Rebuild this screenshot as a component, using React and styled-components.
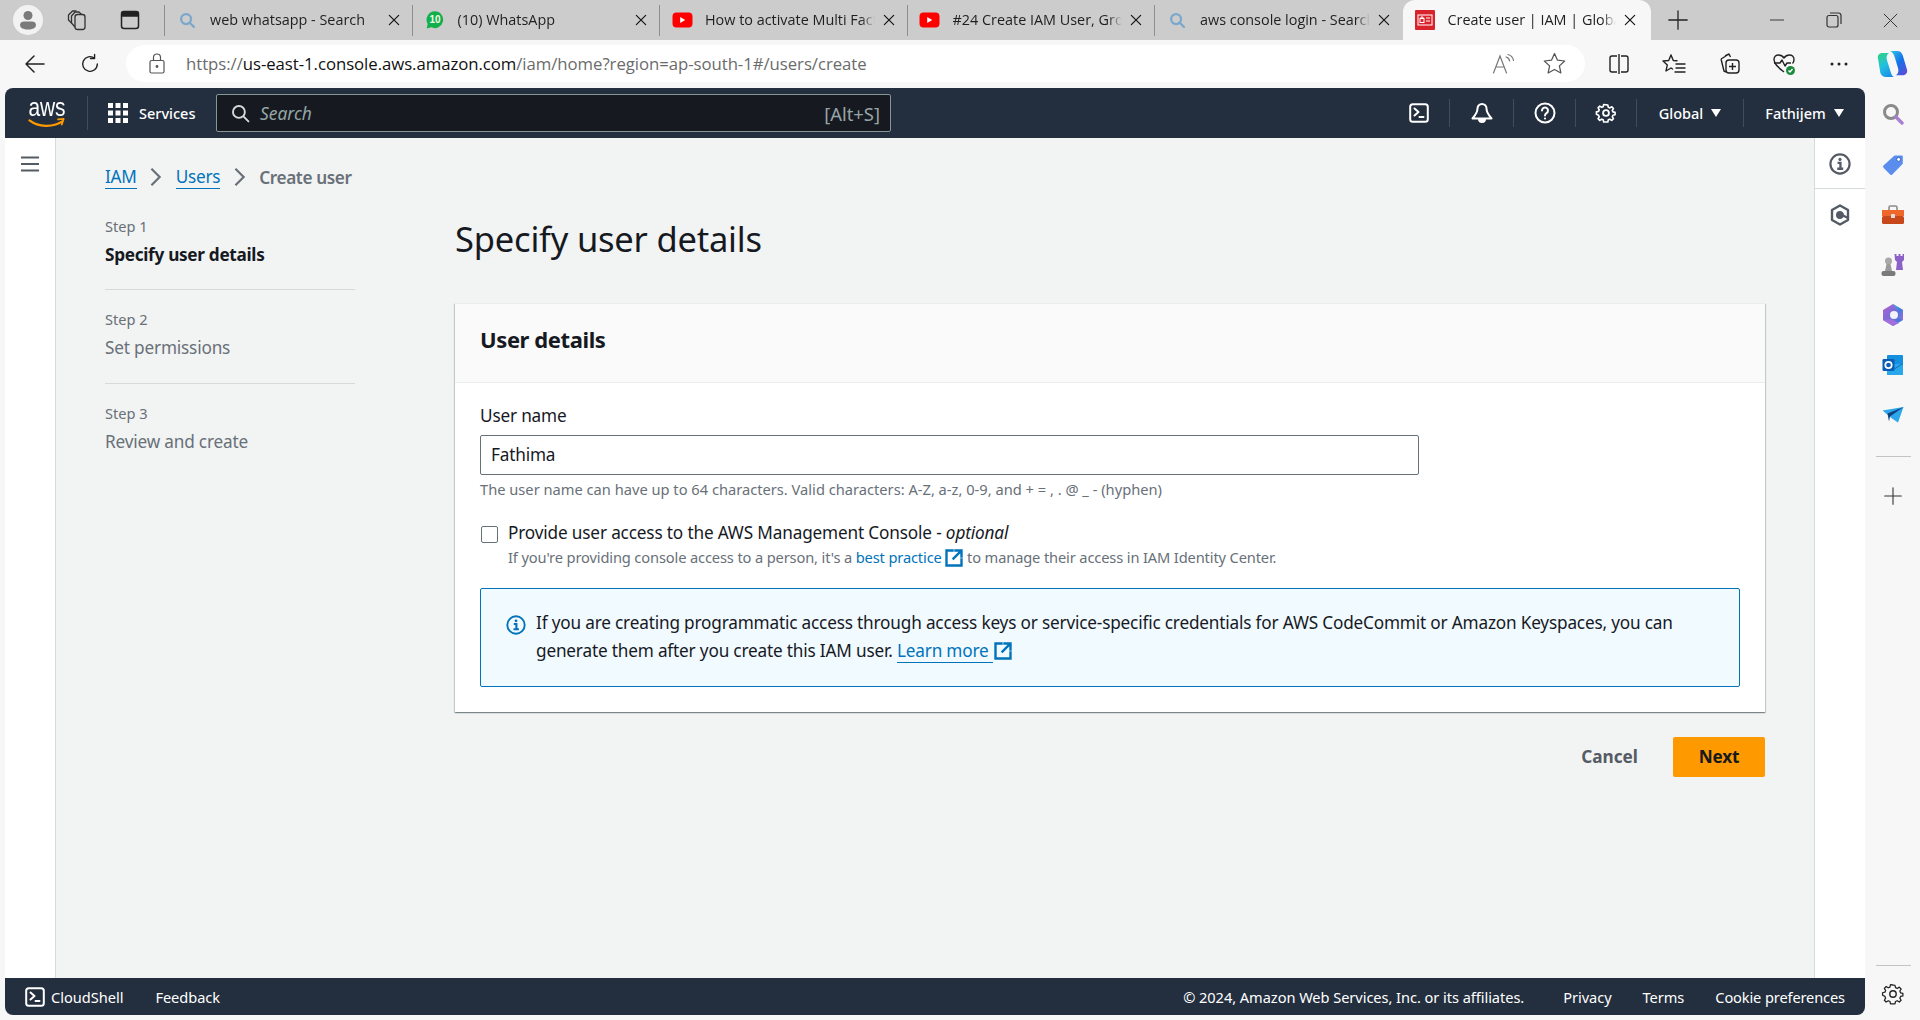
import React from "react";
import styled, { createGlobalStyle } from "styled-components";

const EMBER = `"Noto Sans", "Open Sans", Arial, sans-serif`;
const UI = `"Open Sans", "Noto Sans", Arial, sans-serif`;

const Global = createGlobalStyle`
  html, body { margin: 0; padding: 0; height: 100%; background: #f7f7f7; overflow: hidden; }
  #root { height: 100%; }
  * { box-sizing: border-box; }
`;

const Page = styled.div`
  width: 1920px; height: 1020px; display: flex; flex-direction: column;
  font-family: ${EMBER}; background: #f7f7f7; overflow: hidden;
`;

/* Browser tab strip */
const TabStrip = styled.div`
  height: 40px; flex: none; background: #cccccc; display: flex; align-items: stretch;
`;
const ProfileArea = styled.div`
  width: 164px; display: flex; align-items: center; flex: none; padding-left: 13px; color: #333;
`;
const Avatar = styled.div`
  width: 30px; height: 30px; border-radius: 50%; background: #f2f2f2; display: flex;
  align-items: center; justify-content: center; margin-right: 22px;
`;
const StripIcon = styled.span`
  display: flex; width: 24px; justify-content: center; margin-right: ${p => p.$gap || 0}px;
`;
const StripSep = styled.span`width: 1px; height: 31px; margin-top: 5px; background: #8f8f8f; flex: none;`;
const Tab = styled.div`
  width: ${p => p.$active ? 248 : 247.5}px; flex: none; height: 40px; display: flex; align-items: center; position: relative;
  padding-left: 11px; padding-right: ${p => p.$active ? 11 : 9}px;
  background: ${p => p.$active ? "#f7f7f7" : "transparent"};
  border-radius: ${p => p.$active ? "12px 12px 0 0" : "0"};
  &::after {
    content: ""; display: ${p => p.$sep ? "block" : "none"};
    position: absolute; right: 0; top: 5px; height: 31px; width: 1px; background: #8f8f8f;
  }
`;
const FavSlot = styled.span`
  width: 22px; height: 22px; flex: none; display: flex; align-items: center; justify-content: center; margin-right: 12px;
`;
const TabTitle = styled.span`
  flex: 1; min-width: 0; font-family: ${UI}; font-size: 14.4px; line-height: 20px; margin-top: -1px; color: #1f1f1f; white-space: nowrap; overflow: hidden;
  -webkit-mask-image: linear-gradient(to right, #000 calc(100% - 14px), transparent);
  mask-image: linear-gradient(to right, #000 calc(100% - 14px), transparent);
`;
const TabClose = styled.span`display: flex; flex: none; margin-left: 4px; width: 20px; justify-content: center; color: #111;`;
const NewTab = styled.span`display: flex; width: 54px; justify-content: center; align-items: center; color: #222;`;
const WinControls = styled.div`
  margin-left: auto; display: flex; align-items: center; color: #333; padding-right: 1px;
`;
const WinBtn = styled.span`display: flex; width: 57px; justify-content: center;`;

/* Address toolbar */
const Toolbar = styled.div`
  height: 48px; flex: none; background: #f7f7f7; display: flex; align-items: center; padding-left: 23px; color: #222;
`;
const NavBtn = styled.span`display: flex; width: 24px; flex: none; justify-content: center; margin-right: ${p => p.$gap || 0}px;`;
const AddressBar = styled.div`
  width: 1459px; height: 37px; flex: none; margin-top: -1px; margin-left: 24px; background: #fff; border-radius: 19px; display: flex; align-items: center; padding-left: 23px; padding-right: 18px;
`;
const Lock = styled.span`display: flex; margin-right: 21px; color: #555;`;
const Url = styled.div`font-family: ${UI}; font-size: 16.76px; color: #6b6b6b; white-space: nowrap; letter-spacing: -0.05px;`;
const Domain = styled.span`color: #111;`;
const AddressRight = styled.div`margin-left: auto; display: flex; gap: 26px; align-items: center; color: #555;`;
const ToolGroup = styled.div`display: flex; align-items: center; margin-left: 6px; flex: none;`;
const ToolBtn = styled.span`display: flex; width: ${p => p.$w || 55}px; justify-content: center; color: #222;`;

/* Body */
const Body = styled.div`flex: 1; display: flex; min-height: 0;`;
const Frame = styled.div`
  width: 1860px; margin-left: 5px; margin-bottom: 5px; flex: none; display: flex; flex-direction: column;
  border-radius: 8px; overflow: hidden; background: #f2f3f3;
`;
const TopNav = styled.div`
  height: 50px; flex: none; background: #232f3e; display: flex; align-items: center; color: #fff;
`;
const LogoCell = styled.div`
  width: 83px; flex: none; height: 34px; display: flex; flex-direction: column; align-items: center; padding-left: 1px; border-right: 1px solid #414d5c;
`;
const LogoText = styled.span`
  font-family: "Liberation Sans", Arial, sans-serif; font-size: 25px; line-height: 20px; height: 21px; letter-spacing: -0.2px; color: #fff; margin-top: 1px; transform: scaleX(0.84);
`;
const ServicesBtn = styled.div`
  display: flex; align-items: center; margin-left: 20px; width: 108px; font-size: 14.5px; font-weight: 500; color: #fff; gap: 11px;
`;
const SearchBox = styled.div`
  width: 675px; height: 38px; flex: none; background: #16191f; border: 1px solid #879596; border-radius: 2px;
  display: flex; align-items: center; padding: 0 10px 0 14px; color: #d5dbdb;
`;
const SearchPh = styled.span`font-style: italic; font-size: 17.4px; color: #95a5a6; margin-left: 10px;`;
const Shortcut = styled.span`margin-left: auto; font-size: 18.4px; color: #95a5a6;`;
const NavRight = styled.div`margin-left: auto; display: flex; align-items: center; height: 100%;`;
const NavIcon = styled.div`
  width: ${p => p.$w}px; height: 28px; display: flex; justify-content: center; align-items: center;
  border-left: ${p => p.$first ? "none" : "1px solid #414d5c"};
`;
const NavMenu = styled.div`
  width: ${p => p.$w}px; height: 28px; display: flex; align-items: center; justify-content: center; gap: 8px;
  font-size: 14.5px; font-weight: 500; border-left: 1px solid #414d5c;
`;
const Caret = styled.span`
  width: 0; height: 0; border-left: 5.5px solid transparent; border-right: 5.5px solid transparent; border-top: 8px solid #fff;
`;

const Main = styled.div`flex: 1; display: flex; min-height: 0;`;
const LeftRail = styled.div`
  width: 51px; flex: none; background: #fff; border-right: 1px solid #d5dbdb; padding: 17px 0 0 15px; color: #545b64;
`;
const Content = styled.div`flex: 1; padding: 25px 49px 0 49px; min-width: 0;`;
const Crumbs = styled.div`display: flex; align-items: center; height: 28px; font-size: 17.2px; letter-spacing: -0.25px;`;
const CrumbLink = styled.a`color: #0073bb; border-bottom: 1px solid #0073bb; line-height: 22px;`;
const CrumbSep = styled.span`display: flex; width: 39px; justify-content: center; color: #687078;`;
const CrumbCur = styled.span`color: #687078; font-weight: 600; letter-spacing: -0.4px;`;
const Wizard = styled.div`display: grid; grid-template-columns: 250px 1310px; column-gap: 100px;`;
const Steps = styled.div`padding-top: 24px;`;
const Step = styled.div`
  padding-top: ${p => p.$first ? 0 : 18}px; height: ${p => p.$first ? 75 : 94}px;
  border-bottom: ${p => p.$last ? "none" : "1px solid #d5dbdb"};
`;
const StepNum = styled.div`font-size: 14.6px; line-height: 22px; color: #687078;`;
const StepName = styled.div`
  font-size: 17.2px; line-height: 24px; margin-top: 6px; color: ${p => p.$on ? "#16191f" : "#687078"}; font-weight: ${p => p.$on ? 700 : 400};
  letter-spacing: ${p => p.$on ? -0.3 : -0.18}px;
`;
const Form = styled.div``;
const H1 = styled.h1`margin: 26px 0 0; height: 86px; font-size: 34.5px; font-weight: 400; line-height: 44px; color: #16191f; letter-spacing: -0.2px;`;
const Card = styled.div`
  background: #fff; height: 409px; border-top: 1px solid #eaeded;
  box-shadow: 0 1px 1px rgba(0,28,36,.3), 1px 1px 1px rgba(0,28,36,.15), -1px 1px 1px rgba(0,28,36,.15);
`;
const CardHead = styled.div`
  height: 79px; background: #fafafa; border-bottom: 1px solid #eaeded; padding: 20px 25px 0; font-size: 22px; font-weight: 700; line-height: 30px; color: #16191f; letter-spacing: -0.4px;
`;
const CardBody = styled.div`padding: 20px 25px 0;`;
const Label = styled.div`font-size: 17.2px; line-height: 26px; color: #16191f; height: 32px; letter-spacing: -0.18px;`;
const NameInput = styled.div`
  width: 939px; height: 40px; border: 1px solid #687078; border-radius: 2px; padding: 0 10px 2px; display: flex; align-items: center; font-size: 17.2px; color: #16191f; letter-spacing: -0.18px;
`;
const Hint = styled.div`font-size: 14.66px; line-height: 22px; color: #687078; margin-top: 3px;`;
const CheckRow = styled.div`display: flex; margin-top: 20px;`;
const CheckBox = styled.span`
  width: 17px; height: 17px; flex: none; border: 1px solid #687078; border-radius: 2px; background: #fff; margin: 6px 10px 0 1px;
`;
const CheckText = styled.div``;
const CheckLabel = styled.div`font-size: 17.2px; line-height: 26px; color: #16191f; letter-spacing: -0.16px;`;
const CheckSub = styled.div`
  font-size: 14.66px; line-height: 22px; color: #687078; margin-top: 0; white-space: nowrap; letter-spacing: -0.14px;
`;
const Inline = styled.span`color: #0073bb;`;
const Alert = styled.div`
  margin-top: 20px; height: 99px; width: 1260px; border: 1px solid #0073bb; border-radius: 2px; background: #f1faff;
  display: flex; padding: 20px 20px 0 25px; color: #16191f; font-size: 17.2px; line-height: 28px; letter-spacing: -0.18px;
`;
const AlertIcon = styled.span`display: flex; flex: none; margin: 6px 10px 0 0; color: #0073bb;`;
const AlertLink = styled.span`color: #0073bb; border-bottom: 1px solid #0073bb;`;
const ExtIcon = styled.span`display: inline-flex; vertical-align: ${p => p.$drop}px; margin-left: ${p => p.$ml}px; color: #0073bb;`;
const Actions = styled.div`display: flex; justify-content: flex-end; align-items: center; margin-top: 25px; gap: 35px;`;
const Cancel = styled.span`font-size: 17.2px; font-weight: 700; color: #545b64; padding-bottom: 2px;`;
const Next = styled.span`
  width: 92px; height: 40px; background: #ff9900; border-radius: 2px; display: flex; align-items: center; justify-content: center; padding-bottom: 2px;
  font-size: 17.2px; font-weight: 700; color: #16191f; letter-spacing: -0.2px;
`;
const RightRail = styled.div`width: 51px; flex: none; background: #fff; border-left: 1px solid #d5dbdb; color: #545b64; display: flex; flex-direction: column;`;
const RailCell = styled.div`
  height: 51px; display: flex; justify-content: center; align-items: center;
  padding-top: ${p => p.$line ? 1 : 0}px;
  border-bottom: ${p => p.$line ? "1px solid #d5dbdb" : "none"};
`;
const Footer = styled.div`
  height: 37px; flex: none; background: #232f3e; color: #fff; display: flex; align-items: center; padding: 1px 20px 0; font-size: 14.6px;
`;
const FootIcon = styled.span`display: flex; margin-right: 6px;`;
const FootItem = styled.span`margin-right: ${p => p.$gap || 0}px; margin-left: ${p => p.$auto ? "auto" : "0"}; white-space: nowrap; letter-spacing: ${p => p.$ls ?? -0.05}px;`;

/* Edge sidebar */
const EdgeBar = styled.div`
  flex: 1; display: flex; flex-direction: column; align-items: center; padding: 16px 0 6px 0; margin-left: 1px;
`;
const EdgeItem = styled.div`
  height: ${p => p.$h || 50}px; margin-bottom: ${p => p.$mb || 0}px; flex: none; display: flex; align-items: center; justify-content: center; width: 100%; color: ${p => p.$c || "#333"};
`;
const EdgeLine = styled.div`width: 35px; height: 1px; background: #c4c4c4; flex: none; margin: ${p => p.$m};`;
const EdgeSpacer = styled.div`flex: 1;`;

/* ---- drawings ---- */
const S = ({ size = 20, children, ...r }) => (
  <svg width={size} height={size} viewBox="0 0 24 24" fill="none" stroke="currentColor" strokeWidth="1.5" strokeLinecap="round" strokeLinejoin="round" {...r}>{children}</svg>
);
const CloseX = ({ size = 14 }) => <S size={size} strokeWidth="2"><path d="M4 4l16 16M20 4L4 20" /></S>;
const MagFav = () => (
  <svg width="17" height="17" viewBox="0 0 24 24" fill="none" stroke="#7ba7cc" strokeWidth="3.2" strokeLinecap="round"><circle cx="10" cy="10" r="7" /><path d="M15.5 15.5L21 21" /></svg>
);
const WaFav = () => (
  <svg width="20" height="20" viewBox="0 0 22 22">
    <path d="M11 1.5a9.2 9.2 0 0 0-8 13.8L1.8 20.4l5.2-1.3A9.2 9.2 0 1 0 11 1.5z" fill="#12b04a" />
    <text x="11" y="14.600" textAnchor="middle" fontSize="11" fontWeight="700" fontFamily="Liberation Sans, Arial, sans-serif" fill="#f1fbe8">10</text>
  </svg>
);
const YtFav = () => (
  <svg width="21" height="16" viewBox="0 0 21 16"><rect width="20" height="15" x="0.5" y="0.5" rx="4" fill="#f00" /><path d="M8.2 5l5 3-5 3z" fill="#fff" /></svg>
);
const AwsFav = () => (
  <svg width="20" height="20" viewBox="0 0 20 20"><rect width="20" height="20" rx="1" fill="#d8232d" /><rect x="3" y="5" width="14" height="10" fill="none" stroke="#fff" strokeWidth="1" /><rect x="5" y="8.5" width="4" height="4" fill="none" stroke="#fff" strokeWidth="1" /><path d="M6 8.5V7h2v1.5M11 8h4M11 11h4" stroke="#fff" strokeWidth="1" fill="none" /></svg>
);
const Fav = { mag: MagFav, wa: WaFav, yt: YtFav, aws: AwsFav };

const Terminal = ({ size = 20 }) => (
  <svg width={size} height={size} viewBox="0 0 20 20" fill="none" stroke="currentColor" strokeWidth="2" strokeLinecap="round" strokeLinejoin="round">
    <rect x="1.2" y="1.2" width="17.6" height="17.6" rx="2.5" /><path d="M5.5 5.5l4 3.5-4 3.5M10.5 14h4" />
  </svg>
);
const ExtLink = ({ size = 18 }) => (
  <svg width={size} height={size} viewBox="0 0 18 18" fill="none" stroke="currentColor" strokeWidth="2.4" strokeLinecap="square">
    <path d="M7.5 1.5H1.5v15h15v-6M10.500 1.500h6v6M16 2L8.500 9.500" />
  </svg>
);
const GridIcon = () => (
  <svg width="20" height="20" viewBox="0 0 20 20" fill="#fff">
    {[0, 7.5, 15].flatMap(y => [0, 7.5, 15].map(x => <rect key={`${x}-${y}`} x={x} y={y} width="5" height="5" />))}
  </svg>
);
const Gear = ({ size = 22, sw = 2 }) => (
  <svg width={size} height={size} viewBox="0 0 24 24" fill="none" stroke="currentColor" strokeWidth={sw} strokeLinejoin="round">
    <path d="M12 2l2.2 0.4.6 2.6 1.9.8 2.3-1.4 2 2.1-1.4 2.3.8 1.9 2.6.6v2.8l-2.6.6-.8 1.9 1.4 2.3-2 2-2.3-1.4-1.9.8-.6 2.6H9.2l-.6-2.6-1.9-.8-2.3 1.4-2-2 1.4-2.3-.8-1.9L.4 13.4v-2.8L3 10l.8-1.9L2.4 5.8l2-2.1 2.3 1.4 1.9-.8.6-2.6z" transform="translate(1.2 1.2) scale(0.9)" />
    <circle cx="12" cy="12" r="3.2" />
  </svg>
);
const InfoIcon = ({ size = 20, sw = 2 }) => (
  <svg width={size} height={size} viewBox="0 0 20 20" fill="none" stroke="currentColor" strokeWidth={sw}>
    <circle cx="10" cy="10" r="8.7" />
    <circle cx="10" cy="5.8" r="1.4" fill="currentColor" stroke="none" />
    <path d="M7.8 9h2.6v5M7.500 14.300h5.400" strokeWidth="2.1" />
  </svg>
);
const Hex = () => (
  <svg width="20" height="22" viewBox="0 0 20 22" fill="none" stroke="currentColor" strokeWidth="2.4" strokeLinejoin="round">
    <path d="M10 1.500l8 4.500v10l-8 4.500L2 16V6z" /><circle cx="10" cy="11" r="2.800" fill="currentColor" /><path d="M12 11l6 3" />
  </svg>
);
const Bell = () => (
  <svg width="22" height="22" viewBox="0 0 22 22" fill="none" stroke="#fff" strokeWidth="2" strokeLinejoin="round">
    <path d="M11 2a4.500 4.500 0 0 0-4.500 4.500c0 4-2 6.500-5 10h19c-3-3.500-5-6-5-10A4.500 4.500 0 0 0 11 2z" />
    <path d="M8 17a3 3 0 0 0 6 0z" fill="#fff" />
  </svg>
);
const Swoosh = () => (
  <svg width="38" height="12" viewBox="0 0 40 13" fill="none">
    <path d="M1 2.500c10 7.500 25 8 35 1.500" stroke="#ff9900" strokeWidth="2.400" strokeLinecap="round" />
    <path d="M32 1.500l6-.5-2 6" stroke="#ff9900" strokeWidth="2" strokeLinecap="round" strokeLinejoin="round" />
  </svg>
);
const Copilot = () => (
  <svg width="31" height="28" viewBox="0 0 31 28">
    <defs>
      <linearGradient id="cpa" x1="0" y1="0" x2="0.8" y2="1"><stop offset="0" stopColor="#2ecbe8" /><stop offset="0.55" stopColor="#1570e8" /><stop offset="1" stopColor="#5a4fd8" /></linearGradient>
      <linearGradient id="cpb" x1="0.2" y1="0" x2="0.7" y2="1"><stop offset="0" stopColor="#2fd08a" /><stop offset="0.5" stopColor="#23bfe0" /><stop offset="1" stopColor="#1a8fe8" /></linearGradient>
    </defs>
    <path d="M13 1h7c3 0 4.800 1.500 5.700 4.200l4.200 14c1 3.500-1 6-4.200 6H19c2.200-1.500 3-4 2-7.200L17.500 6.500C16.600 3.500 15 2 13 1z" fill="url(#cpa)" />
    <path d="M17 27h-8c-3 0-4.800-1.500-5.700-4.200L1.100 9c-1-3.500 1-6 4.200-6H12c-2.200 1.500-3 4-2 7.200L13.500 21.500C14.400 24.500 15 26 17 27z" fill="url(#cpb)" />
  </svg>
);
const Edge = {
  search: () => (
    <svg width="22" height="22" viewBox="0 0 22 22" fill="none" strokeLinecap="round"><circle cx="9" cy="9" r="6.5" stroke="#8a8a8a" strokeWidth="3" /><path d="M14 14l6 6" stroke="#a97fd6" strokeWidth="3.4" /></svg>
  ),
  tag: () => (
    <svg width="22" height="22" viewBox="0 0 22 22"><path d="M12.5 1.5H20a.8.8 0 0 1 .8.8v7.5L10.3 20.4a1.6 1.6 0 0 1-2.2 0l-6.6-6.6a1.6 1.6 0 0 1 0-2.2z" fill="#5b8def" /><circle cx="16.6" cy="5.4" r="2" fill="#fff" stroke="#3563c9" /></svg>
  ),
  tool: () => (
    <svg width="24" height="20" viewBox="0 0 24 20"><path d="M8 5V2.5A1.5 1.5 0 0 1 9.5 1h5A1.5 1.5 0 0 1 16 2.5V5" fill="none" stroke="#8c8c8c" strokeWidth="1.6" /><rect x="1" y="5" width="22" height="6" fill="#f0672b" /><rect x="1" y="11" width="22" height="8" rx="1.5" fill="#c8481c" /><rect x="10" y="9" width="4" height="4" rx=".6" fill="#ddd" /></svg>
  ),
  chess: () => (
    <svg width="24" height="24" viewBox="0 0 24 24"><path d="M13.500 1h2v2h2V1h2v2h2V1h1.500v6l-2 2 1 8h-7l1-8-2-2z" fill="#8b62c7" /><circle cx="7.500" cy="8" r="3.500" fill="#a8a8a8" /><path d="M5.500 11h4l1.500 7H4z" fill="#9a9a9a" /><rect x="0.500" y="18" width="14" height="5" rx="2" fill="#7a7a7a" /></svg>
  ),
  m365: () => (
    <svg width="22" height="24" viewBox="0 0 22 24"><defs><linearGradient id="m1" x1="0" y1="0" x2="1" y2="1"><stop offset="0" stopColor="#b85fd0" /><stop offset="1" stopColor="#2f7be0" /></linearGradient><linearGradient id="m2" x1="0" y1="0" x2="1" y2="1"><stop offset="0" stopColor="#36c8d6" /><stop offset=".5" stopColor="#3c7fe0" /><stop offset="1" stopColor="#a66ad8" /></linearGradient></defs><path d="M11 1l10 6v10l-10 6L1 17V7z" fill="url(#m1)" /><path d="M11 1l10 6v10l-4-2V9z" fill="url(#m2)" /><path d="M1 17l10 6 6-3-8-4z" fill="#a36ddc" /><circle cx="12" cy="12" r="4" fill="#f2f4fb" /></svg>
  ),
  outlook: () => (
    <svg width="22" height="22" viewBox="0 0 22 22"><rect x="5" y="1" width="16" height="20" rx="1" fill="#1490df" /><path d="M5 10l16 0v10a1 1 0 0 1-1 1H6a1 1 0 0 1-1-1z" fill="#28a8ea" /><path d="M21 9.5l-8 5-8-5" fill="none" stroke="#0f6cbd" /><rect x="0.5" y="5" width="12" height="12" rx="1.2" fill="#0a5eb5" /><circle cx="6.5" cy="11" r="3.2" fill="none" stroke="#fff" strokeWidth="1.7" /></svg>
  ),
  send: () => (
    <svg width="22" height="16" viewBox="0 0 22 16"><path d="M0.5 3.5L21.5 0 16 15.5 10 11.5z" fill="#2ca7ec" /><path d="M5.5 6.5L21.5 0 8 9.5 7 14.5z" fill="#10417f" /></svg>
  )
};

const tabs = [
  { fav: "mag", title: "web whatsapp - Search", sep: true },
  { fav: "wa", title: "(10) WhatsApp", sep: true },
  { fav: "yt", title: "How to activate Multi Factor", sep: true },
  { fav: "yt", title: "#24 Create IAM User, Group", sep: true },
  { fav: "mag", title: "aws console login - Search", sep: false },
  { fav: "aws", title: "Create user | IAM | Global", active: true }
];

export default function App() {
  return (
    <Page>
      <Global />
      <TabStrip>
        <ProfileArea>
          <Avatar>
            <svg width="18" height="20" viewBox="0 0 18 20" fill="#7b7b7b"><circle cx="9" cy="5.5" r="4.5" /><path d="M1 15c0-2.5 2-3.5 4-3.5h8c2 0 4 1 4 3.5 0 3-3.5 4.500-8 4.500s-8-1.500-8-4.500z" /></svg>
          </Avatar>
          <StripIcon $gap={29}>
            <svg width="22" height="22" viewBox="0 0 22 22" fill="none" stroke="#333" strokeWidth="1.3" strokeLinejoin="round"><rect x="9" y="5.500" width="10" height="15" rx="2.500" /><path d="M9 18 L5.500 14 V7 l3.500-4 h4 l2.500 2.500" /><path d="M5.500 14 L2.500 11 V6 l4-4 h4" /></svg>
          </StripIcon>
          <StripIcon>
            <svg width="20" height="20" viewBox="0 0 20 20" fill="none" stroke="#222" strokeWidth="1.5"><rect x="1.500" y="1.500" width="17" height="17" rx="2.500" /><path d="M2 2.500h16v3.500H2z" fill="#222" /></svg>
          </StripIcon>
        </ProfileArea>
        <StripSep />
        {tabs.map(t => {
          const F = Fav[t.fav];
          return (
            <Tab key={t.title} $active={t.active} $sep={t.sep}>
              <FavSlot><F /></FavSlot>
              <TabTitle>{t.title}</TabTitle>
              <TabClose><CloseX /></TabClose>
            </Tab>
          );
        })}
        <NewTab><S size={22} strokeWidth="1.4"><path d="M12 2v20M2 12h20" /></S></NewTab>
        <WinControls>
          <WinBtn><S size={16} strokeWidth="1.4"><path d="M2 12h20" /></S></WinBtn>
          <WinBtn>
            <svg width="16" height="16" viewBox="0 0 16 16" fill="none" stroke="currentColor" strokeWidth="1.2"><rect x="1" y="3.500" width="11" height="11.500" rx="2" /><path d="M4 1h8.500A2.500 2.500 0 0 1 15 3.500V12" /></svg>
          </WinBtn>
          <WinBtn><S size={17} strokeWidth="1.4"><path d="M3 3l18 18M21 3L3 21" /></S></WinBtn>
        </WinControls>
      </TabStrip>

      <Toolbar>
        <NavBtn $gap={31}>
          <S size={24} strokeWidth="1.5"><path d="M21 12H3M11 4l-8 8 8 8" /></S>
        </NavBtn>
        <NavBtn>
          <S size={22} strokeWidth="1.5"><path d="M20 12a8 8 0 1 1-3-6.200M17 1.500V6h-4.500" /></S>
        </NavBtn>
        <AddressBar>
          <Lock>
            <svg width="16" height="21" viewBox="0 0 16 21" fill="none" stroke="currentColor" strokeWidth="1.2"><rect x="1" y="7.500" width="14" height="12.500" rx="1.500" /><path d="M4.500 7.500V4.500a3.500 3.500 0 0 1 7 0v3" /><circle cx="8" cy="13.500" r=".8" fill="currentColor" /></svg>
          </Lock>
          <Url>https://<Domain>us-east-1.console.aws.amazon.com</Domain>/iam/home?region=ap-south-1#/users/create</Url>
          <AddressRight>
            <svg width="24" height="22" viewBox="0 0 24 22" fill="none" stroke="#777" strokeWidth="1.2" strokeLinecap="round"><path d="M1.500 20L8 3l6.500 17M4 14h8" /><path d="M14 4c2 .500 3.300 2 3.600 4M16 1.500c3 .8 5 3 5.500 6" /></svg>
            <S size={25} strokeWidth="1.2"><path d="M12 2.500l2.900 6.300 6.900.8-5.100 4.700 1.400 6.800-6.100-3.400-6.100 3.400 1.400-6.800-5.100-4.700 6.900-.8z" /></S>
          </AddressRight>
        </AddressBar>
        <ToolGroup>
          <ToolBtn>
            <svg width="22" height="22" viewBox="0 0 22 22" fill="none" stroke="currentColor" strokeWidth="1.4"><path d="M9 3H4a2 2 0 0 0-2 2v12a2 2 0 0 0 2 2h5M13 3h5a2 2 0 0 1 2 2v12a2 2 0 0 1-2 2h-5M11 1v20" /></svg>
          </ToolBtn>
          <ToolBtn>
            <svg width="24" height="22" viewBox="0 0 24 22" fill="none" stroke="currentColor" strokeWidth="1.4" strokeLinejoin="round" strokeLinecap="round"><path d="M9 2l2.300 5.500 3.700.3M9 2L6.700 7.500 1 8l4.300 3.900L4 18l5-3 1.500 1" /><path d="M14 11h9M14 15h9M13 19h10" /></svg>
          </ToolBtn>
          <ToolBtn>
            <svg width="24" height="24" viewBox="0 0 24 24" fill="none" stroke="currentColor" strokeWidth="1.4" strokeLinejoin="round"><path d="M8 4l4-2 1.500 3M4 7l5-3M4 7l3 12 2 1" /><rect x="9" y="8" width="13" height="13" rx="3" /><path d="M15.500 11v7M12 14.500h7" /></svg>
          </ToolBtn>
          <ToolBtn>
            <svg width="24" height="24" viewBox="0 0 24 24" fill="none" stroke="currentColor" strokeWidth="1.4" strokeLinejoin="round"><path d="M12 20C7 16 2 12.500 2 7.500 2 4.500 4.300 3 6.500 3 9 3 11 4.500 12 6c1-1.500 3-3 5.500-3C19.700 3 22 4.500 22 7.500c0 1.500-.5 3-1.500 4" /><path d="M2 11h6l2-3 3 6 2-3h4" /><circle cx="18.500" cy="18.500" r="4.500" fill="#1a8a3c" stroke="none" /><path d="M16.500 18.500l1.500 1.500 2.500-3" stroke="#fff" /></svg>
          </ToolBtn>
          <ToolBtn>
            <svg width="18" height="4" viewBox="0 0 18 4" fill="#222"><circle cx="2" cy="2" r="1.500" /><circle cx="9" cy="2" r="1.500" /><circle cx="16" cy="2" r="1.500" /></svg>
          </ToolBtn>
          <ToolBtn $w={53}><Copilot /></ToolBtn>
        </ToolGroup>
      </Toolbar>

      <Body>
        <Frame>
          <TopNav>
            <LogoCell>
              <LogoText>aws</LogoText>
              <Swoosh />
            </LogoCell>
            <ServicesBtn><GridIcon />Services</ServicesBtn>
            <SearchBox>
              <S size={19} strokeWidth="2.4"><circle cx="10" cy="10" r="7.500" /><path d="M16 16l6 6" /></S>
              <SearchPh>Search</SearchPh>
              <Shortcut>[Alt+S]</Shortcut>
            </SearchBox>
            <NavRight>
              <NavIcon $first $w={60}><Terminal /></NavIcon>
              <NavIcon $w={64}><Bell /></NavIcon>
              <NavIcon $w={62}>
                <svg width="22" height="22" viewBox="0 0 22 22" fill="none" stroke="#fff" strokeWidth="2" strokeLinecap="round"><circle cx="11" cy="11" r="9.500" /><path d="M8 8.500a3 3 0 1 1 4.500 2.600c-1 .6-1.500 1.200-1.500 2.400" /><circle cx="11" cy="16.500" r="1.100" fill="#fff" stroke="none" /></svg>
              </NavIcon>
              <NavIcon $w={61}><Gear /></NavIcon>
              <NavMenu $w={107}>Global<Caret /></NavMenu>
              <NavMenu $w={122}>Fathijem<Caret /></NavMenu>
            </NavRight>
          </TopNav>
          <Main>
            <LeftRail>
              <svg width="20" height="16" viewBox="0 0 20 16" fill="none" stroke="currentColor" strokeWidth="2.200"><path d="M1 1.500h18M1 8h18M1 14.500h18" /></svg>
            </LeftRail>
            <Content>
              <Crumbs>
                <CrumbLink>IAM</CrumbLink>
                <CrumbSep><S size={22} strokeWidth="2.400" strokeLinecap="butt" strokeLinejoin="miter"><path d="M7 3l9 9-9 9" /></S></CrumbSep>
                <CrumbLink>Users</CrumbLink>
                <CrumbSep><S size={22} strokeWidth="2.400" strokeLinecap="butt" strokeLinejoin="miter"><path d="M7 3l9 9-9 9" /></S></CrumbSep>
                <CrumbCur>Create user</CrumbCur>
              </Crumbs>
              <Wizard>
                <Steps>
                  <Step $first>
                    <StepNum>Step 1</StepNum>
                    <StepName $on>Specify user details</StepName>
                  </Step>
                  <Step>
                    <StepNum>Step 2</StepNum>
                    <StepName>Set permissions</StepName>
                  </Step>
                  <Step $last>
                    <StepNum>Step 3</StepNum>
                    <StepName>Review and create</StepName>
                  </Step>
                </Steps>
                <Form>
                  <H1>Specify user details</H1>
                  <Card>
                    <CardHead>User details</CardHead>
                    <CardBody>
                      <Label>User name</Label>
                      <NameInput>Fathima</NameInput>
                      <Hint>The user name can have up to 64 characters. Valid characters: A-Z, a-z, 0-9, and + = , . @ _ - (hyphen)</Hint>
                      <CheckRow>
                        <CheckBox />
                        <CheckText>
                          <CheckLabel>Provide user access to the AWS Management Console - <i>optional</i></CheckLabel>
                          <CheckSub>If you're providing console access to a person, it's a <Inline>best practice</Inline> <ExtIcon $ml={0} $drop={-4}><ExtLink /></ExtIcon> to manage their access in IAM Identity Center.</CheckSub>
                        </CheckText>
                      </CheckRow>
                      <Alert>
                        <AlertIcon><InfoIcon sw={1.900} /></AlertIcon>
                        <div>
                          If you are creating programmatic access through access keys or service-specific credentials for AWS CodeCommit or Amazon Keyspaces, you can generate them after you create this IAM user. <AlertLink>Learn more </AlertLink><ExtIcon $ml={1} $drop={-3}><ExtLink /></ExtIcon>
                        </div>
                      </Alert>
                    </CardBody>
                  </Card>
                  <Actions>
                    <Cancel>Cancel</Cancel>
                    <Next>Next</Next>
                  </Actions>
                </Form>
              </Wizard>
            </Content>
            <RightRail>
              <RailCell $line><InfoIcon size={22} /></RailCell>
              <RailCell><Hex /></RailCell>
            </RightRail>
          </Main>
          <Footer>
            <FootIcon><Terminal /></FootIcon>
            <FootItem $gap={32} $ls={-0.02}>CloudShell</FootItem>
            <FootItem>Feedback</FootItem>
            <FootItem $auto $gap={39}>© 2024, Amazon Web Services, Inc. or its affiliates.</FootItem>
            <FootItem $gap={31}>Privacy</FootItem>
            <FootItem $gap={31}>Terms</FootItem>
            <FootItem $ls={-0.12}>Cookie preferences</FootItem>
          </Footer>
        </Frame>
        <EdgeBar>
          <EdgeItem $h={20} $mb={16}><Edge.search /></EdgeItem>
          <EdgeItem><Edge.tag /></EdgeItem>
          <EdgeItem><Edge.tool /></EdgeItem>
          <EdgeItem><Edge.chess /></EdgeItem>
          <EdgeItem><Edge.m365 /></EdgeItem>
          <EdgeItem><Edge.outlook /></EdgeItem>
          <EdgeItem><Edge.send /></EdgeItem>
          <EdgeLine $m="16px 0 14px" />
          <EdgeItem><S size={20} strokeWidth="1.300"><path d="M12 2v20M2 12h20" /></S></EdgeItem>
          <EdgeSpacer />
          <EdgeLine $m="0 0 8px" />
          <EdgeItem $h={40} $c="#222"><Gear size={24} sw={1.400} /></EdgeItem>
        </EdgeBar>
      </Body>
    </Page>
  );
}
